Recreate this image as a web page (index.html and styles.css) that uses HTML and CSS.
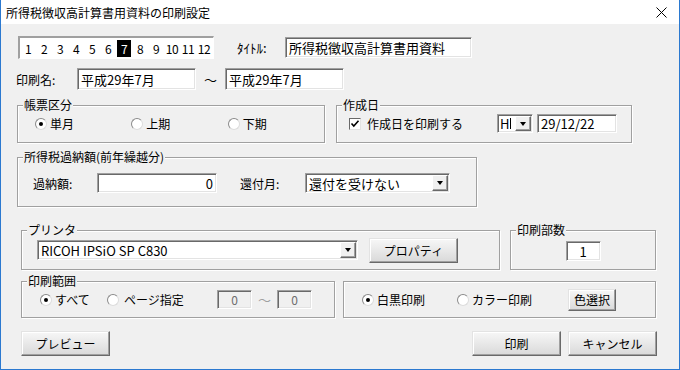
FILE: index.html
```html
<!DOCTYPE html>
<html lang="ja">
<head>
  <meta charset="UTF-8">
  <title>所得税徴収高計算書用資料の印刷設定</title>
  <link rel="stylesheet" href="styles.css">
</head>
<body>
  <div class="window">
    <div class="titlebar">
      <span class="title">所得税徴収高計算書用資料の印刷設定</span>
      <span class="close">
        <svg width="11" height="11" viewBox="0 0 11 11"><path d="M0.5 0.5 L10.5 10.5 M10.5 0.5 L0.5 10.5" stroke="#000" stroke-width="1"/></svg>
      </span>
    </div>

    <div class="client">
      <!-- 月選択とタイトル -->
      <div class="row row-title">
        <div class="months">
          <span class="month">1</span>
          <span class="month">2</span>
          <span class="month">3</span>
          <span class="month">4</span>
          <span class="month">5</span>
          <span class="month">6</span>
          <span class="month current">7</span>
          <span class="month">8</span>
          <span class="month">9</span>
          <span class="month">10</span>
          <span class="month">11</span>
          <span class="month">12</span>
        </div>
        <span class="label label-title">ﾀｲﾄﾙ:</span>
        <div class="edit edit-title">所得税徴収高計算書用資料</div>
      </div>

      <div class="row row-name">
        <span class="label label-name">印刷名:</span>
        <div class="edit edit-name">平成29年7月</div>
        <span class="tilde">～</span>
        <div class="edit edit-name">平成29年7月</div>
      </div>

      <div class="row row-kind">
        <div class="group group-kind">
          <span class="legend">帳票区分</span>
          <div class="group-body">
            <span class="option option-kind"><span class="radio on"></span>単月</span>
            <span class="option option-kind"><span class="radio"></span>上期</span>
            <span class="option option-kind"><span class="radio"></span>下期</span>
          </div>
        </div>
        <div class="group group-date">
          <span class="legend">作成日</span>
          <div class="group-body">
            <span class="option option-check">
              <span class="check">
                <svg width="10" height="10" viewBox="0 0 10 10"><path d="M1.5 4.5 L3.8 7 L8.5 1.8" fill="none" stroke="#000" stroke-width="1.6"/></svg>
              </span>作成日を印刷する
            </span>
            <div class="combo combo-era"><span class="era-text">H</span><span class="caret"></span><span class="drop"><span class="arrow"></span></span></div>
            <div class="edit edit-date">29/12/22</div>
          </div>
        </div>
      </div>

      <div class="row row-over">
        <div class="group group-over">
          <span class="legend">所得税過納額(前年繰越分)</span>
          <div class="group-body">
            <span class="label label-over">過納額:</span>
            <div class="edit edit-amount">0</div>
            <span class="label label-refund">還付月:</span>
            <div class="combo combo-refund"><span class="combo-text">還付を受けない</span><span class="drop"><span class="arrow"></span></span></div>
          </div>
        </div>
      </div>

      <div class="row row-printer">
        <div class="group group-printer">
          <span class="legend">プリンタ</span>
          <div class="group-body">
            <div class="combo combo-printer"><span class="combo-text">RICOH IPSiO SP C830</span><span class="drop"><span class="arrow"></span></span></div>
            <button class="btn btn-prop">プロパティ</button>
          </div>
        </div>
        <div class="group group-copies">
          <span class="legend">印刷部数</span>
          <div class="group-body">
            <div class="edit edit-copies">1</div>
          </div>
        </div>
      </div>

      <div class="row row-range">
        <div class="group group-range">
          <span class="legend">印刷範囲</span>
          <div class="group-body">
            <span class="option option-all"><span class="radio on"></span>すべて</span>
            <span class="option option-page"><span class="radio"></span>ページ指定</span>
            <div class="edit edit-page">0</div>
            <span class="tilde tilde-page">～</span>
            <div class="edit edit-page">0</div>
          </div>
        </div>
        <div class="group group-color">
          <div class="group-body">
            <span class="option option-mono"><span class="radio on"></span>白黒印刷</span>
            <span class="option option-color"><span class="radio"></span>カラー印刷</span>
            <button class="btn btn-color">色選択</button>
          </div>
        </div>
      </div>

      <div class="row row-buttons">
        <button class="btn btn-main">プレビュー</button>
        <button class="btn btn-main btn-print">印刷</button>
        <button class="btn btn-main">キャンセル</button>
      </div>
    </div>
  </div>
</body>
</html>
```

FILE: styles.css
```css
* {
  box-sizing: border-box;
}
body {
  margin: 0;
  font-family: "Noto Sans CJK JP", "Noto Sans", sans-serif;
  font-size: 12px;
  color: #000;
  background: #fff;
}
.window {
  width: 680px;
  height: 370px;
  border: 1px solid #2b79d0;
  border-top: none;
  background: #f0f0f0;
  overflow: hidden;
}
.titlebar {
  height: 24px;
  background: #fff;
  display: flex;
  align-items: center;
  justify-content: space-between;
  padding: 0 12px 0 5px;
}
.close {
  display: flex;
}
.row {
  display: flex;
  align-items: center;
}
.label {
  white-space: nowrap;
}

/* edit boxes */
.edit {
  height: 20px;
  background: #fff;
  border: 1px solid;
  border-color: #a0a0a0 #fff #fff #a0a0a0;
  box-shadow: inset 1px 1px 0 #696969, inset -1px -1px 0 #e3e3e3;
  padding: 0 3px;
  font-size: 13px;
  display: flex;
  align-items: center;
  white-space: nowrap;
  overflow: hidden;
}

/* month strip */
.row-title {
  margin-top: 12px;
  padding-left: 17px;
}
.months {
  width: 196px;
  height: 23px;
  background: #fff;
  border-top: 2px solid #a0a0a0;
  border-left: 2px solid #a0a0a0;
  border-right: 1px solid #fff;
  border-bottom: 1px solid #fff;
  display: flex;
  align-items: center;
}
.month {
  width: 16px;
  height: 17px;
  line-height: 17px;
  text-align: center;
  letter-spacing: -0.5px;
}
.month.current {
  width: 14px;
  margin: 0 1px;
  background: #000;
  color: #fff;
}
.label-title {
  margin-left: 23px;
  width: 48px;
  font-size: 13px;
}
.edit-title {
  width: 187px;
  height: 21px;
}

.row-name {
  margin-top: 9px;
  padding-left: 15px;
}
.label-name {
  width: 61px;
}
.edit-name {
  width: 119px;
  height: 22px;
}
.tilde {
  width: 29px;
  text-align: center;
  font-size: 13px;
}

/* group boxes */
.group {
  position: relative;
  border: 1px solid #a0a0a0;
  box-shadow: 1px 1px 0 #fff, inset 1px 1px 0 #fff;
}
.legend {
  position: absolute;
  top: -8px;
  left: 5px;
  padding: 0 1px;
  line-height: 14px;
  background: #f0f0f0;
  white-space: nowrap;
}
.group-body {
  height: 100%;
  display: flex;
  align-items: center;
}
.option {
  display: flex;
  align-items: center;
  gap: 3px;
  white-space: nowrap;
}
.radio {
  width: 12px;
  height: 12px;
  border-radius: 50%;
  background: #fff;
  border: 1px solid;
  border-color: #8a8a8a #dcdcdc #dcdcdc #8a8a8a;
  display: flex;
  align-items: center;
  justify-content: center;
}
.radio.on::after {
  content: "";
  width: 4px;
  height: 4px;
  border-radius: 50%;
  background: #000;
}
.check {
  width: 12px;
  height: 12px;
  background: #fff;
  border: 1px solid;
  border-color: #696969 #e3e3e3 #e3e3e3 #696969;
  display: flex;
  align-items: center;
  justify-content: center;
}

/* combo boxes */
.combo {
  height: 20px;
  background: #fff;
  border: 1px solid;
  border-color: #a0a0a0 #fff #fff #a0a0a0;
  box-shadow: inset 1px 1px 0 #696969, inset -1px -1px 0 #e3e3e3;
  display: flex;
  align-items: stretch;
  padding: 1px;
  font-size: 13px;
}
.combo-text {
  flex: 1;
  padding-left: 2px;
  display: flex;
  align-items: center;
  white-space: nowrap;
  overflow: hidden;
}
.era-text {
  padding-left: 1px;
  display: flex;
  align-items: center;
}
.caret {
  width: 1px;
  margin: 2px 0 2px 1px;
  background: #000;
}
.drop {
  width: 16px;
  margin-left: auto;
  background: #f0f0f0;
  border: 1px solid;
  border-color: #fff #696969 #696969 #fff;
  box-shadow: inset -1px -1px 0 #a0a0a0;
  display: flex;
  align-items: center;
  justify-content: center;
}
.arrow {
  width: 0;
  height: 0;
  border-left: 3.5px solid transparent;
  border-right: 3.5px solid transparent;
  border-top: 4px solid #000;
}

/* buttons */
.btn {
  font-family: inherit;
  font-size: 12px;
  color: #000;
  height: 25px;
  padding: 0;
  border: 1px solid;
  border-color: #e3e3e3 #696969 #696969 #e3e3e3;
  background: linear-gradient(#f7f7f7, #d9d9d9);
  box-shadow: inset -1px -1px 0 #a0a0a0, inset 1px 1px 0 #fff;
}

.row-kind {
  margin-top: 15px;
  padding-left: 16px;
  gap: 11px;
}
.group-kind {
  width: 308px;
  height: 38px;
}
.group-kind .group-body {
  padding: 0 0 1px 17px;
}
.option-kind {
  width: 100px;
}
.group-date {
  width: 296px;
  height: 38px;
}
.group-date .group-body {
  padding: 0 0 1px 12px;
}
.option-check {
  width: 148px;
  gap: 6px;
}
.combo-era {
  width: 36px;
  height: 19px;
}
.edit-date {
  width: 80px;
  height: 19px;
  margin-left: 4px;
}

.row-over {
  margin-top: 14px;
  padding-left: 16px;
}
.group-over {
  width: 460px;
  height: 50px;
}
.group-over .group-body {
  padding: 2px 0 0 15px;
}
.label-over {
  width: 64px;
}
.edit-amount {
  width: 120px;
  justify-content: flex-end;
}
.label-refund {
  margin-left: 23px;
  width: 65px;
}
.combo-refund {
  width: 145px;
}

.row-printer {
  margin-top: 23px;
  padding-left: 20px;
  gap: 10px;
}
.group-printer {
  width: 479px;
  height: 40px;
}
.group-printer .group-body {
  padding-left: 15px;
}
.combo-printer {
  width: 321px;
}
.btn-prop {
  width: 89px;
  margin-left: 11px;
}
.group-copies {
  width: 146px;
  height: 40px;
}
.group-copies .group-body {
  justify-content: center;
  padding-top: 2px;
}
.edit-copies {
  width: 35px;
  justify-content: center;
}

.row-range {
  margin-top: 11px;
  padding-left: 20px;
  gap: 8px;
}
.group-range {
  width: 314px;
  height: 37px;
}
.group-range .group-body {
  padding-left: 18px;
}
.option-all {
  width: 67px;
}
.option-page {
  width: 110px;
  gap: 5px;
}
.edit-page {
  width: 35px;
  height: 19px;
  background: #f0f0f0;
  color: #6d6d6d;
  justify-content: center;
  font-size: 12px;
}
.tilde-page {
  width: 25px;
  color: #a0a0a0;
}
.group-color {
  width: 313px;
  height: 37px;
}
.group-color .group-body {
  padding-left: 18px;
}
.option-mono {
  width: 95px;
}
.option-color {
  width: 111px;
}
.btn-color {
  width: 48px;
  height: 22px;
}

.row-buttons {
  margin-top: 13px;
  padding: 0 22px 0 20px;
  gap: 7px;
}
.btn-main {
  width: 89px;
}
.btn-print {
  margin-left: auto;
}
```
